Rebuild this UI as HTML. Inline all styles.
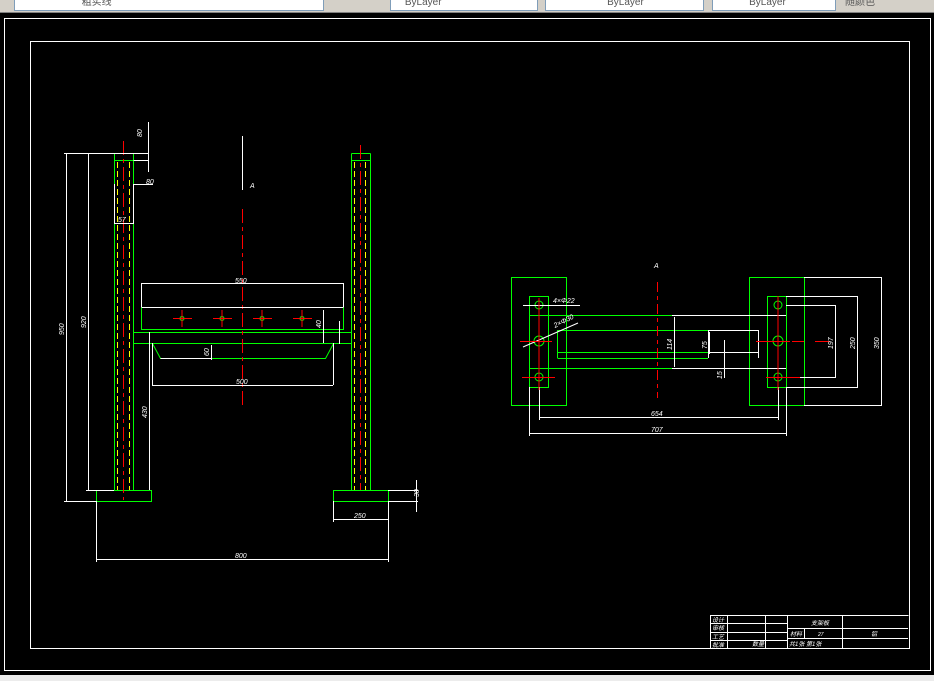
<!DOCTYPE html>
<html><head><meta charset="utf-8"><style>
html,body{margin:0;padding:0;background:#000;width:934px;height:681px;overflow:hidden}
.tb{position:absolute;left:0;top:0;width:934px;height:12px;background:#d4d0c8;border-bottom:1px solid #808080}
.dd{position:absolute;top:0;height:10px;background:#fff;border:1px solid #7f9db9;border-top:none;font:10px "Liberation Sans","Noto Sans CJK SC",sans-serif;line-height:6px;color:#555;overflow:hidden}
.bot{position:absolute;left:0;top:675px;width:934px;height:6px;background:#ececec}
svg{position:absolute;left:0;top:0}
text{font-family:"Liberation Sans","Noto Sans CJK SC",sans-serif;fill:#fff;font-style:italic}
</style></head><body>
<div class="tb">
<div class="dd" style="left:14px;width:308px">&nbsp;&nbsp;&nbsp;&nbsp;&nbsp;&nbsp;&nbsp;&nbsp;&nbsp;&nbsp;&nbsp;&nbsp;&nbsp;&nbsp;&nbsp;&nbsp;&nbsp;&nbsp;&nbsp;&nbsp;&nbsp;&nbsp;&nbsp;&nbsp;粗实线</div>
<div class="dd" style="left:390px;width:146px">&nbsp;&nbsp;&nbsp;&nbsp;&nbsp;ByLayer</div>
<div class="dd" style="left:545px;width:157px">&nbsp;&nbsp;&nbsp;&nbsp;&nbsp;&nbsp;&nbsp;&nbsp;&nbsp;&nbsp;&nbsp;&nbsp;&nbsp;&nbsp;&nbsp;&nbsp;&nbsp;&nbsp;&nbsp;&nbsp;&nbsp;&nbsp;ByLayer</div>
<div class="dd" style="left:712px;width:122px">&nbsp;&nbsp;&nbsp;&nbsp;&nbsp;&nbsp;&nbsp;&nbsp;&nbsp;&nbsp;&nbsp;&nbsp;&nbsp;ByLayer</div>
<div class="dd" style="left:845px;width:89px;border:none;background:#d4d0c8">随颜色</div>
</div>
<svg width="934" height="681" viewBox="0 0 934 681" fill="none" stroke-width="1">
<g stroke="#fff">
<rect x="4.5" y="18.5" width="926" height="652"/>
<rect x="30.5" y="41.5" width="879" height="607"/>
</g>
<!-- left column -->
<g stroke="#0f0">
<path d="M114.5 153.5V490.5M133.5 153.5V490.5M114.5 153.5H133.5M114.5 160.5H133.5"/>
<path d="M351.5 153.5V490.5M370.5 153.5V490.5M351.5 153.5H370.5M351.5 160.5H370.5"/>
<rect x="96.5" y="490.5" width="55" height="11"/>
<rect x="333.5" y="490.5" width="55" height="11"/>
<rect x="141.5" y="307.5" width="202" height="22"/>
<path d="M133.5 332.5H351.5M133.5 343.5H351.5M152.5 343.5L160.5 358.5H325.5L333.5 343.5"/>
<circle cx="182" cy="318.5" r="2"/><circle cx="222" cy="318.5" r="2"/><circle cx="262" cy="318.5" r="2"/><circle cx="302" cy="318.5" r="2"/>
</g>
<g stroke="#ff0" stroke-dasharray="6 3">
<path d="M117.5 162V490M129.5 162V490M354.5 162V490M365.5 162V490"/>
</g>
<g stroke="#f00" stroke-dasharray="14 4 4 4">
<path d="M123.5 141V500M360.5 145V490M242.5 209V407"/>
</g>
<g stroke="#f00">
<path d="M173 318.5H192M182 310V327M213 318.5H232M222 310V327M253 318.5H272M262 310V327M293 318.5H312M302 310V327"/>
</g>
<g stroke="#fff">
<path d="M64 153.5H148M66.5 153.5V501M88.5 153.5V490M86 490.5H114M64 501.5H96"/>
<path d="M133.5 160.5H148M148.5 122V172M133 184.5H153M114.5 184V223M133.5 184V223M114 223.5H134"/>
<path d="M141.5 283.5H343.5M141.5 283V307M343.5 283V307M141.5 307.5H343.5"/>
<path d="M152.5 343V385M333.5 343V385M152 385.5H333M160.5 358.5H212M211.5 345V360"/>
<path d="M149.5 332V490M323.5 310V343M339.5 321V344"/>
<path d="M242.5 136V190"/>
<path d="M96.5 501V562M388.5 501V562M96 559.5H388M333.5 501V522M333 519.5H388M388 490.5H418M388 501.5H418M416.5 480V512"/>
</g>
<text x="137" y="132" font-size="7" transform="rotate(-90 142 132)">80</text>
<text x="146" y="184" font-size="7">80</text>
<text x="118" y="222" font-size="7">57</text>
<text x="250" y="188" font-size="7">A</text>
<text x="235" y="283" font-size="7">550</text>
<text x="236" y="384" font-size="7">500</text>
<text x="235" y="558" font-size="7">800</text>
<text x="354" y="518" font-size="7">250</text>
<text x="64" y="335" font-size="7" transform="rotate(-90 64 335)">950</text>
<text x="86" y="328" font-size="7" transform="rotate(-90 86 328)">920</text>
<text x="147" y="418" font-size="7" transform="rotate(-90 147 418)">430</text>
<text x="209" y="356" font-size="7" transform="rotate(-90 209 356)">60</text>
<text x="321" y="328" font-size="7" transform="rotate(-90 321 328)">40</text>
<text x="419" y="497" font-size="7" transform="rotate(-90 419 497)">30</text>
<!-- right view -->
<g stroke="#0f0">
<rect x="511.5" y="277.5" width="55" height="128"/>
<rect x="529.5" y="296.5" width="19" height="91"/>
<rect x="749.5" y="277.5" width="55" height="128"/>
<rect x="767.5" y="296.5" width="19" height="91"/>
<path d="M529 315.5H672M529 368.5H672M557.5 330.5H708M557.5 358.5H708M557.5 330V358M557 352.5H708"/>
<circle cx="539" cy="305" r="4"/><circle cx="539" cy="341" r="5"/><circle cx="539" cy="377" r="4"/>
<circle cx="778" cy="305" r="4"/><circle cx="778" cy="341" r="5"/><circle cx="778" cy="377" r="4"/>
</g>
<g stroke="#fff">
<path d="M672 315.5H786M672 368.5H786M708 330.5H758M708 352.5H758M758.5 330V358M708.5 330V358"/>
<path d="M804 277.5H882M881.5 277V405M804 405.5H882M786 296.5H858M857.5 296V387M786 387.5H858M786 305.5H836M835.5 305V377M786 377.5H836"/>
<path d="M674.5 317V367M709.5 332V354M724.5 340V378"/>
<path d="M529.5 387V436M786.5 387V436M530 433.5H786M539.5 387V420M778.5 387V420M539 417.5H778"/>
<path d="M523 305.5H580M523 347L578 323"/>
</g>
<g stroke="#f00" stroke-dasharray="10 4 4 4"><path d="M657.5 282V398"/></g>
<g stroke="#f00"><path d="M539 298V390M520 341.5H552M522 377.5H555M778 296V390M756 341.5H790M766 377.5H800M792 341.5H804M815 341.5H830"/></g>
<text x="654" y="268" font-size="7">A</text>
<text x="553" y="303" font-size="7">4×Φ22</text>
<text x="555" y="328" font-size="7" transform="rotate(-27 555 328)">2×Φ30</text>
<text x="651" y="416" font-size="7">654</text>
<text x="651" y="432" font-size="7">707</text>
<text x="672" y="350" font-size="7" transform="rotate(-90 672 350)">114</text>
<text x="707" y="349" font-size="7" transform="rotate(-90 707 349)">75</text>
<text x="722" y="379" font-size="7" transform="rotate(-90 722 379)">15</text>
<text x="833" y="349" font-size="7" transform="rotate(-90 833 349)">197</text>
<text x="855" y="349" font-size="7" transform="rotate(-90 855 349)">250</text>
<text x="879" y="349" font-size="7" transform="rotate(-90 879 349)">350</text>
<!-- title block -->
<g stroke="#fff">
<path d="M710.5 615.5H908.5M710.5 615V648M727.5 615V648M765.5 615V648M787.5 615V648M842.5 615V648M710 623.5H787M710 632.5H787M710 640.5H787M787 628.5H908M787 638.5H908M804.5 628V638"/>
</g>
<g font-size="6" fill="#fff"><text x="811" y="625">支架板</text><text x="818" y="636" font-size="5">27</text><text x="871" y="636">铝</text><text x="789" y="646">共1张 第1张</text><text x="752" y="646">数量</text><text x="712" y="622">设计</text><text x="712" y="630">审核</text><text x="712" y="639">工艺</text><text x="712" y="647">批准</text><text x="790" y="636">材料</text></g>
</svg>
<div class="bot"></div>
</body></html>
